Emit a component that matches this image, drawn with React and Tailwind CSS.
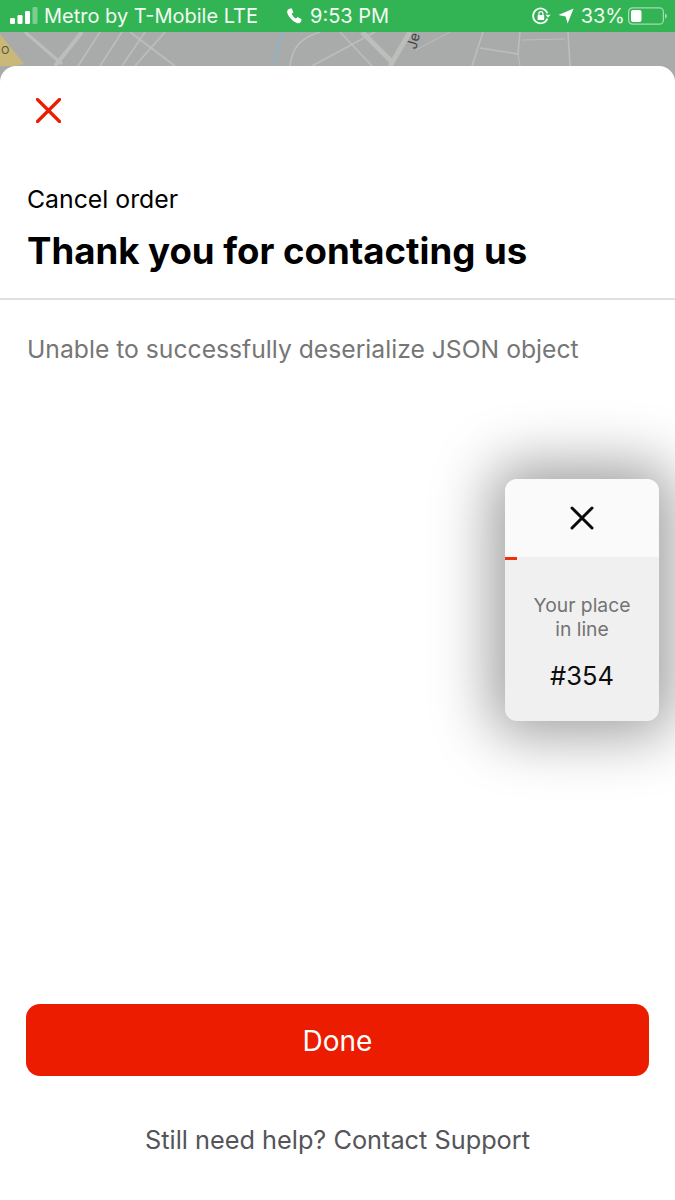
import React from "react"

const SANS = "font-['Inter','Lato',sans-serif]"
const STATUS = "font-['Inter','Liberation_Sans',sans-serif]"

function SignalBars() {
  return (
    <svg width="28" height="20" viewBox="0 0 28 20" className="shrink-0">
      <rect x="0" y="12" width="5" height="6" rx="1.2" fill="#fff" />
      <rect x="7.5" y="9" width="5" height="9" rx="1.2" fill="#fff" />
      <rect x="15" y="5" width="5" height="13" rx="1.2" fill="#fff" />
      <rect x="22.5" y="1" width="5" height="17" rx="1.2" fill="#fff" fillOpacity="0.35" />
    </svg>
  )
}

function PhoneIcon() {
  return (
    <svg width="16" height="16" viewBox="0 0 16 16" className="shrink-0">
      <path
        d="M3.6 0.8 L5.6 0.3 L7.4 4.3 L5.7 5.7 C6.3 7.4 8 9.6 10 10.6 L11.7 9 L15.6 11.2 L15 13.4 C14.4 15 12.6 15.6 11 15 C6.4 13.4 2.2 8.6 1.2 4.6 C0.8 2.8 1.9 1.3 3.6 0.8 Z"
        fill="#fff"
      />
    </svg>
  )
}

function RotationLockIcon() {
  return (
    <svg width="19" height="18" viewBox="0 0 19 18" className="shrink-0">
      <path d="M15.4 11.6 A7.4 7.4 0 1 1 15.4 6.2" fill="none" stroke="#fff" strokeWidth="1.7" />
      <path d="M13.4 7.8 L18.6 7.8 L16 10.8 Z" fill="#fff" />
      <rect x="5.6" y="8" width="6.6" height="5" rx="0.8" fill="#fff" />
      <path d="M6.9 8 V6.6 A2 2 0 0 1 10.9 6.6 V8" fill="none" stroke="#fff" strokeWidth="1.2" />
    </svg>
  )
}

function LocationArrow() {
  return (
    <svg width="16" height="16" viewBox="0 0 16 16" className="shrink-0">
      <path d="M15.6 0.4 L9.6 15.6 L7.6 8.4 L0.4 7 Z" fill="#fff" />
    </svg>
  )
}

function Battery() {
  return (
    <svg width="40" height="18" viewBox="0 0 40 18" className="shrink-0">
      <rect x="0.6" y="0.8" width="34.8" height="16.4" rx="4" fill="none" stroke="#fff" strokeOpacity="0.55" strokeWidth="1.2" />
      <rect x="3" y="3" width="10.5" height="12" rx="2" fill="#fff" />
      <path d="M37 6.4 C38.4 6.8 38.8 7.8 38.8 9 C38.8 10.2 38.4 11.2 37 11.6 Z" fill="#fff" fillOpacity="0.55" />
    </svg>
  )
}

function StatusBar() {
  return (
    <div className={`flex h-8 items-center bg-[#33b454] pl-[10px] pr-[7px] text-[20px] leading-none text-[#f1fbf3] ${STATUS}`}>
      <SignalBars />
      <span className="ml-[6px] whitespace-nowrap">Metro by T-Mobile LTE</span>
      <span className="ml-[28px]">
        <PhoneIcon />
      </span>
      <span className="ml-[8px] whitespace-nowrap">9:53 PM</span>
      <div className="ml-auto flex items-center">
        <RotationLockIcon />
        <span className="ml-[7px]">
          <LocationArrow />
        </span>
        <span className="ml-[7px] whitespace-nowrap">33%</span>
        <span className="ml-[3px]">
          <Battery />
        </span>
      </div>
    </div>
  )
}

// the blurred street map peeking out above the sheet
function MapStrip() {
  return (
    <svg width="675" height="34" viewBox="0 0 675 34" className="block">
      <rect width="675" height="34" fill="#a9abaa" />
      <g fill="none" stroke="#bcbebc" strokeWidth="1.6" className="blur-[0.6px]">
        <path d="M25 0 L62 32" strokeWidth="3" />
        <path d="M82 0 L55 34" strokeWidth="4" />
        <path d="M100 0 L78 34" />
        <path d="M122 0 L100 34" />
        <path d="M145 0 L122 34" />
        <path d="M165 0 L135 34" />
        <path d="M130 0 L175 34" />
        <path d="M290 34 C292 16 300 6 320 0" />
        <path d="M340 0 L372 34" />
        <path d="M375 0 L312 34" />
        <path d="M362 0 L392 30" strokeWidth="5" />
        <path d="M410 0 L390 34" strokeWidth="5" />
        <path d="M483 0 L472 34" />
        <path d="M480 16 L518 22 L520 0" />
        <path d="M518 22 L520 34" strokeWidth="1" />
        <path d="M568 0 L570 34" />
        <path d="M522 8 L565 7" strokeWidth="1" />
        <path d="M416 18 L450 0" strokeWidth="1" />
      </g>
      <path d="M283 0 C279 10 275 22 274 34" fill="none" stroke="#8fb2c8" strokeWidth="2" className="blur-[0.4px]" />
      <path d="M0 2 L24 32 L14 34 L0 34 Z" fill="#c9b878" className="blur-[0.5px]" />
      <text x="1" y="22" fontSize="11" fill="#5a5440" className={STATUS}>O</text>
      <text x="416" y="18" fontSize="14" fill="#444" transform="rotate(-75 416 18)" className={STATUS}>Je</text>
    </svg>
  )
}

function QueueWidget() {
  return (
    <div className={`absolute left-[505px] top-[479px] flex h-[242px] w-[154px] flex-col overflow-hidden rounded-[12px] bg-[#f0f0f0] shadow-[0_0_58px_14px_rgba(0,0,0,0.38)] ${STATUS}`}>
      <div className="flex h-[78px] items-center justify-center bg-[#fafafa]">
        <svg width="24" height="24" viewBox="0 0 24 24">
          <path d="M2 2 L22 22 M22 2 L2 22" stroke="#0a0a0a" strokeWidth="3" strokeLinecap="round" />
        </svg>
      </div>
      <div className="h-[3px] w-3 bg-[#f0300f]" />
      <div className="flex flex-col items-center pt-[33px]">
        <p className="text-center text-[19.3px] leading-[24px] text-[#737373]">
          Your place
          <br />
          in line
        </p>
        <p className="mt-[20px] text-[25.5px] leading-[30px] text-[#0d0d0d]">#354</p>
      </div>
    </div>
  )
}

export default function App() {
  return (
    <div className="relative flex h-[1200px] w-[675px] flex-col overflow-hidden bg-[#a9abaa]">
      <StatusBar />
      <MapStrip />

      <main className={`flex flex-1 flex-col rounded-t-[16px] bg-white ${SANS}`}>
        <div className="px-[36px] pt-[32px]">
          <svg width="25" height="25" viewBox="0 0 25 25" className="block">
            <path d="M1.5 1.5 L23.5 23.5 M23.5 1.5 L1.5 23.5" stroke="#ec1c00" strokeWidth="3.2" strokeLinecap="round" />
          </svg>
        </div>

        <div className="border-b-2 border-[#e0e0e0] px-[27px] pb-[24px] pt-[59px]">
          <p className="text-[24.8px] leading-[34px] text-black">Cancel order</p>
          <h1 className="mt-[12px] text-[36.6px] font-bold leading-[46px] text-black">Thank you for contacting us</h1>
        </div>

        <p className="px-[27px] pt-[31px] text-[24.7px] leading-[36px] text-[#767676]">
          Unable to successfully deserialize JSON object
        </p>

        <div className="mt-auto px-[26px]">
          <button className="h-[72px] w-full rounded-[14px] bg-[#ec1c00] pt-[2px] text-[28px] text-white">Done</button>
          <p className="pb-[42px] pt-[46px] text-center text-[25.3px] leading-[36px] text-[#54555a]">
            Still need help? Contact Support
          </p>
        </div>
      </main>

      <QueueWidget />
    </div>
  )
}
